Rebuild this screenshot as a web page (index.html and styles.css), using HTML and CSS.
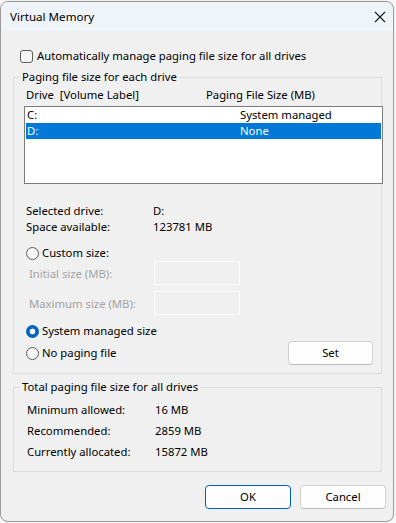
FILE: index.html
```html
<!DOCTYPE html>
<html>
<head>
<meta charset="utf-8">
<link rel="stylesheet" href="styles.css">
</head>
<body>
<div class="window">
  <div class="titlebar">
    <span class="title">Virtual Memory</span>
    <svg class="close" width="12" height="12" viewBox="0 0 12 12"><path d="M1 1 L11 11 M11 1 L1 11" stroke="#1b1b1b" stroke-width="1.1" fill="none"/></svg>
  </div>
  <div class="content">
    <label class="auto-row"><span class="checkbox"></span><span>Automatically manage paging file size for all drives</span></label>

    <fieldset class="group group-drives">
      <legend>Paging file size for each drive</legend>
      <div class="list-head"><span>Drive&nbsp;&nbsp;[Volume Label]</span><span>Paging File Size (MB)</span></div>
      <div class="listbox">
        <div class="list-row"><span>C:</span><span>System managed</span></div>
        <div class="list-row selected"><span>D:</span><span>None</span></div>
      </div>
      <div class="info-row first"><span>Selected drive:</span><span>D:</span></div>
      <div class="info-row"><span>Space available:</span><span>123781 MB</span></div>
      <div class="radio-row custom"><span class="radio"></span><span>Custom size:</span></div>
      <div class="size-row"><span class="disabled">Initial size (MB):</span><span class="input"></span></div>
      <div class="size-row second"><span class="disabled">Maximum size (MB):</span><span class="input"></span></div>
      <div class="radio-row system"><span class="radio checked"></span><span>System managed size</span></div>
      <div class="nopage-row">
        <div class="radio-label"><span class="radio"></span><span>No paging file</span></div>
        <button class="btn set">Set</button>
      </div>
    </fieldset>

    <fieldset class="group group-total">
      <legend>Total paging file size for all drives</legend>
      <div class="total-row first"><span>Minimum allowed:</span><span>16 MB</span></div>
      <div class="total-row"><span>Recommended:</span><span>2859 MB</span></div>
      <div class="total-row"><span>Currently allocated:</span><span>15872 MB</span></div>
    </fieldset>

    <div class="buttons">
      <button class="btn ok">OK</button>
      <button class="btn">Cancel</button>
    </div>
  </div>
</div>
</body>
</html>
```

FILE: styles.css
```css
* { box-sizing: border-box; }
html, body { margin: 0; padding: 0; background: #f9f9f9; }
body {
  font-family: "Noto Sans", "Open Sans", sans-serif;
  font-size: 11.3px;
  color: #000;
}
.window {
  width: 394px;
  height: 521px;
  margin-top: 1px;
  border: 1px solid #9a9a9a;
  border-radius: 8px;
  background: #f0f0f0;
  overflow: hidden;
  box-shadow: 0 0 2px rgba(0,0,0,0.15);
}
.titlebar {
  height: 29px;
  background: #eff4f9;
  display: flex;
  align-items: center;
  justify-content: space-between;
  padding: 0 7px 0 9px;
}
.title { font-size: 11.6px; line-height: 16px; }
.close { display: block; }
.content {
  padding: 17px 7px 0 12px;
  display: flex;
  flex-direction: column;
}
.auto-row {
  display: flex;
  align-items: center;
  gap: 4px;
  height: 16px;
  line-height: 16px;
  margin-left: 7px;
}
.checkbox {
  width: 13px; height: 13px;
  border: 1px solid #5d5d5d;
  border-radius: 3px;
  background: #f7f7f7;
  flex: none;
}
.group {
  margin: 5px 4px 0 0;
  border: 1px solid #dcdcdc;
  padding: 0 0 8px 10px;
  min-inline-size: 0;
}
.group legend {
  padding: 0 2px;
  margin-left: -4px;
  line-height: 16px;
}
.list-head {
  display: grid;
  grid-template-columns: 180px 1fr;
  height: 16px;
  line-height: 16px;
  margin-top: 2px;
  padding-left: 2px;
}
.listbox {
  width: 359px;
  height: 78px;
  margin-top: 3px;
  border: 1px solid #7c7c7c;
  background: #fff;
  padding: 0 1px;
}
.list-row {
  display: grid;
  grid-template-columns: 213px 1fr;
  height: 16px;
  line-height: 16px;
  padding-left: 1px;
}
.list-row.selected { background: #0078d7; color: #fff; }
.info-row {
  display: grid;
  grid-template-columns: 127px 1fr;
  height: 16px;
  line-height: 16px;
  padding-left: 2px;
}
.info-row.first { margin-top: 19px; }
.radio-row, .radio-label {
  display: flex;
  align-items: center;
  gap: 3px;
  height: 16px;
  line-height: 16px;
  padding-left: 2px;
}
.radio-row.custom { margin-top: 10px; }
.radio-row.system { margin-top: 8px; }
.radio {
  width: 13px; height: 13px;
  border-radius: 50%;
  border: 1px solid #5d5d5d;
  background: #f7f7f7;
  flex: none;
}
.radio.checked {
  border: none;
  background: radial-gradient(circle, #fff 0, #fff 2.6px, #0067c0 3.2px);
}
.size-row {
  display: grid;
  grid-template-columns: 125px 86px;
  height: 24px;
  align-items: center;
  padding-left: 5px;
}
.size-row.second { margin-top: 6px; }
.disabled { color: #a3a3a3; }
.input {
  display: block;
  width: 86px;
  height: 24px;
  border: 1px solid #fbfbfb;
  background: #f0f0f0;
}
.nopage-row {
  display: flex;
  align-items: center;
  justify-content: space-between;
  height: 24px;
  margin-top: 2px;
  padding-right: 8px;
}
.btn {
  font: inherit;
  color: #000;
  height: 24px;
  width: 86px;
  background: #fdfdfd;
  border: 1px solid #d0d0d0;
  border-bottom-color: #bdbdbd;
  border-radius: 4px;
  padding: 0;
  line-height: 20px;
}
.btn.set { width: 85px; }
.btn.ok { border-color: #005fb8; }
.group-total { padding: 0 0 11px 13px; }
.group-total legend { margin-left: -7px; }
.total-row {
  display: grid;
  grid-template-columns: 128px 1fr;
  height: 16px;
  line-height: 16px;
  margin-top: 5px;
}
.total-row.first { margin-top: 7px; }
.buttons {
  display: flex;
  justify-content: flex-end;
  gap: 9px;
  margin-top: 13px;
}
```
